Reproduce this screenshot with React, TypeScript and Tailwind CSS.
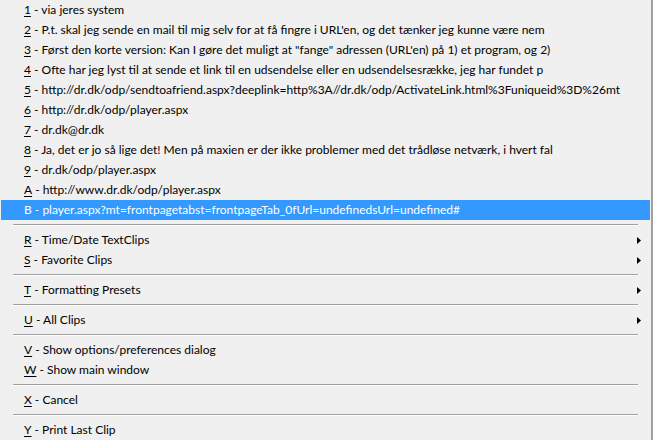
import React from "react";

type Entry =
  | { kind: "item"; key: string; label: string; sub?: boolean; active?: boolean }
  | { kind: "sep" };

const entries: Entry[] = [
  { kind: "item", key: "1", label: "via jeres system" },
  { kind: "item", key: "2", label: "P.t. skal jeg sende en mail til mig selv for at få fingre i URL'en, og det tænker jeg kunne være nem" },
  { kind: "item", key: "3", label: "Først den korte version: Kan I gøre det muligt at \"fange\" adressen (URL'en) på 1) et program, og 2)" },
  { kind: "item", key: "4", label: "Ofte har jeg lyst til at sende et link til en udsendelse eller en udsendelsesrække, jeg har fundet p" },
  { kind: "item", key: "5", label: "http://dr.dk/odp/sendtoafriend.aspx?deeplink=http%3A//dr.dk/odp/ActivateLink.html%3Funiqueid%3D%26mt" },
  { kind: "item", key: "6", label: "http://dr.dk/odp/player.aspx" },
  { kind: "item", key: "7", label: "dr.dk@dr.dk" },
  { kind: "item", key: "8", label: "Ja, det er jo så lige det! Men på maxien er der ikke problemer med det trådløse netværk, i hvert fal" },
  { kind: "item", key: "9", label: "dr.dk/odp/player.aspx" },
  { kind: "item", key: "A", label: "http://www.dr.dk/odp/player.aspx" },
  { kind: "item", key: "B", label: "player.aspx?mt=frontpagetabst=frontpageTab_0fUrl=undefinedsUrl=undefined#", active: true },
  { kind: "sep" },
  { kind: "item", key: "R", label: "Time/Date TextClips", sub: true },
  { kind: "item", key: "S", label: "Favorite Clips", sub: true },
  { kind: "sep" },
  { kind: "item", key: "T", label: "Formatting Presets", sub: true },
  { kind: "sep" },
  { kind: "item", key: "U", label: "All Clips", sub: true },
  { kind: "sep" },
  { kind: "item", key: "V", label: "Show options/preferences dialog" },
  { kind: "item", key: "W", label: "Show main window" },
  { kind: "sep" },
  { kind: "item", key: "X", label: "Cancel" },
  { kind: "sep" },
  { kind: "item", key: "Y", label: "Print Last Clip" },
];

export default function App() {
  return (
    <div className="w-[653px] h-[440px] overflow-hidden bg-[#f0f0f0] text-[12px] text-black font-['Lato','Open_Sans',sans-serif]">
      {/* menu body, grey edge on the right */}
      <div className="flex flex-col w-[653px] border-r-2 border-[#a0a0a0] h-full">
        {entries.map((e, i) =>
          e.kind === "sep" ? (
            <div key={i} className="h-[10px] pt-[4px] pl-[13px] pr-[13px]">
              <div className="h-px bg-[#a0a0a0]" />
              <div className="h-px bg-white" />
            </div>
          ) : (
            <div
              key={i}
              className={`h-[20px] flex items-center pl-[23px] pr-[9px] ml-px mr-px whitespace-nowrap leading-none ${
                e.active ? "bg-[#3399ff] text-white" : ""
              }`}
            >
              <span className={e.active ? "" : "underline underline-offset-2"}>{e.key}</span>
              <span>&nbsp;- {e.label}</span>
              {e.sub && (
                <svg className="ml-auto" width="4" height="7" viewBox="0 0 4 7">
                  <path d="M0 0 L4 3.5 L0 7 Z" fill="#000" />
                </svg>
              )}
            </div>
          )
        )}
      </div>
    </div>
  );
}
